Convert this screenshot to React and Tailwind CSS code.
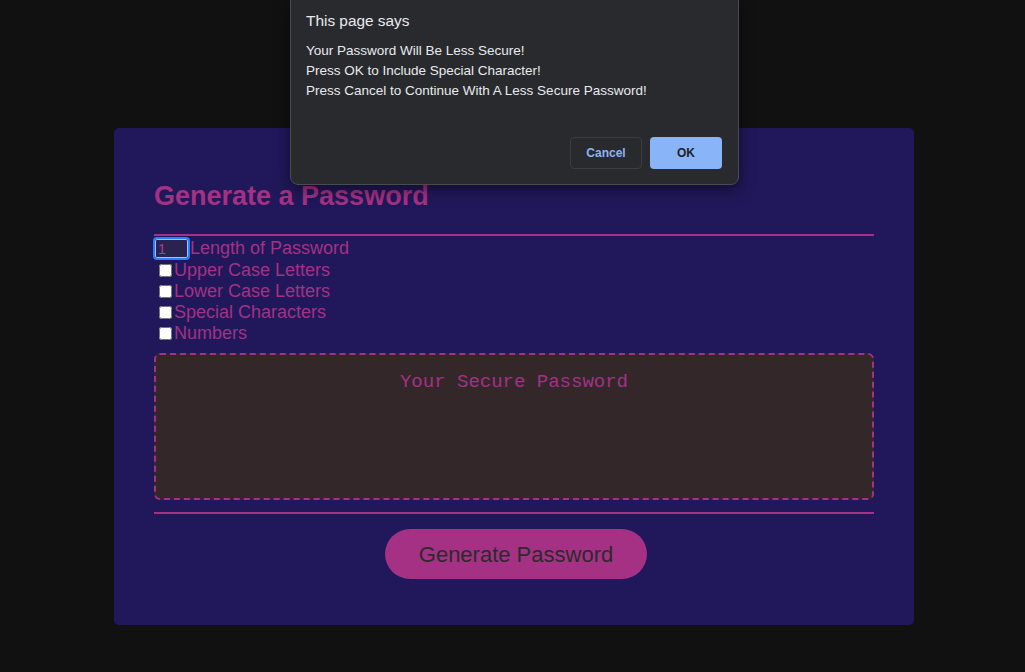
import React from 'react';

const options = ['Upper Case Letters', 'Lower Case Letters', 'Special Characters', 'Numbers'];

export default function App() {
    return (
        <div className="relative min-h-[672px] bg-[#111111] pt-[128px] font-['Liberation_Sans',Arial,sans-serif]">
            {/* Generator card */}
            <div className="ml-[114px] w-[800px] h-[497px] rounded-[5px] bg-[#20185a] px-10 pt-[53px]">
                <h2 className="text-[27px] leading-[31px] font-bold text-[#a53184]">Generate a Password</h2>
                <div className="mt-[22px] h-[2px] bg-[#a53184]"></div>

                <div className="flex items-center h-[23px] mt-[1px]">
                    <input
                        type="text"
                        defaultValue="1"
                        className="-ml-[1px] w-[37px] h-[23px] rounded-[4px] border-2 border-[#2f7df6] bg-[#2a2350] px-[3px] text-[14px] text-[#b23a8c] outline-none ring-1 ring-inset ring-[#9ec1ff]"
                    />
                    <span className="text-[18px] leading-[21px] text-[#a53184]">Length of Password</span>
                </div>
                {options.map((opt) => (
                    <label key={opt} className="flex items-center h-[21px] text-[18px] leading-[21px] text-[#a53184]">
                        <input type="checkbox" className="ml-[5px] mr-[2px] w-[13px] h-[13px]" />
                        {opt}
                    </label>
                ))}

                {/* Output box */}
                <div className="mt-[9px] h-[147px] rounded-[6px] border-2 border-dashed border-[#a53184] bg-[#33272a] pt-[16px] text-center font-['Liberation_Mono','Courier_New',monospace] text-[19px] leading-[22px] text-[#a53184]">
                    Your Secure Password
                </div>
                <div className="mt-[12px] h-[2px] bg-[#a53184]"></div>

                <div className="flex justify-center pl-[4px] mt-[15px]">
                    <button className="w-[262px] h-[50px] rounded-full bg-[#a53184] text-[22px] text-[#2b2b2b]">
                        Generate Password
                    </button>
                </div>
            </div>

            {/* Browser alert */}
            <div className="absolute left-[290px] top-[-1px] w-[449px] h-[186px] rounded-b-[8px] border border-[#4a4b4f] bg-[#292a2d] pl-[15px] pr-4 pt-[11px] font-['Liberation_Sans',Arial,sans-serif] shadow-[0_4px_16px_rgba(0,0,0,0.5)]">
                <div className="text-[15.4px] leading-[20px] text-[#e8eaed]">This page says</div>
                <div className="mt-[10px] text-[13.5px] leading-[20px] text-[#e8eaed]">
                    <p>Your Password Will Be Less Secure!</p>
                    <p>Press OK to Include Special Character!</p>
                    <p>Press Cancel to Continue With A Less Secure Password!</p>
                </div>
                <div className="mt-[36px] flex justify-end gap-2">
                    <button className="w-[72px] h-[32px] rounded-[4px] border border-[#3c3d41] text-[12px] font-bold text-[#8ab4f8]">Cancel</button>
                    <button className="w-[72px] h-[32px] rounded-[4px] bg-[#8ab4f8] text-[12px] font-bold text-[#202124]">OK</button>
                </div>
            </div>
        </div>
    );
}
